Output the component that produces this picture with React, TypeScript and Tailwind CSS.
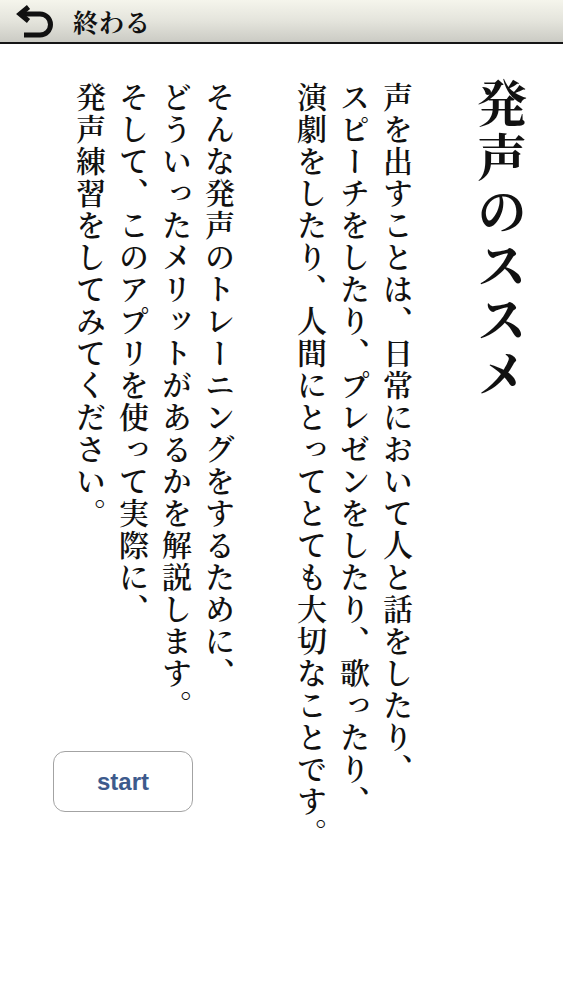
import React from "react";

const jp = { fontFamily: '"Noto Serif CJK JP", "Noto Sans CJK JP", "Noto Sans CJK SC", serif' };

export default function App() {
  return (
    <div className="w-[563px] h-[1000px] bg-white text-[#111]" style={jp}>
      <header className="flex items-center h-[44px] border-b-2 border-[#151515] bg-gradient-to-b from-[#f5f5ec] via-[#e4e4dc] to-[#cbcbc4]">
        <svg width="42" height="34" viewBox="15 5 42 34" className="ml-[15px] shrink-0">
          <path d="M22 15 H40 A10.5 10.5 0 0 1 40 36 H24" fill="none" stroke="#111" strokeWidth="5" />
          <path d="M28.5 8 L20 15 L28.5 22" fill="none" stroke="#111" strokeWidth="5" strokeLinejoin="miter" />
        </svg>
        <span className="ml-[16px] text-[25px] leading-none font-bold tracking-[1px]">終わる</span>
      </header>

      <main className="flex flex-row justify-end items-start pt-[34px] pr-[36px]">
        <div className="flex flex-col items-end">
          <p className="[writing-mode:vertical-rl] h-[640px] mt-[4px] text-[30px] leading-[43px] tracking-[2px] font-semibold whitespace-nowrap">
            そんな発声のトレーニングをするために、<br />
            どういったメリットがあるかを解説します。<br />
            そして、このアプリを使って実際に、<br />
            発声練習をしてみてください。
          </p>
          <button
            className="mt-[29px] mr-[48px] w-[140px] h-[61px] rounded-[12px] border-[1.5px] border-[#a3a3a3] bg-white text-[#3d5a8c] text-[24px] font-bold"
            style={{ fontFamily: '"Liberation Sans", Arial, sans-serif' }}
          >
            start
          </button>
        </div>
        <p className="[writing-mode:vertical-rl] h-[768px] mt-[4px] ml-[49px] text-[30px] leading-[43px] tracking-[2px] font-semibold whitespace-nowrap">
          声を出すことは、日常において人と話をしたり、<br />
          スピーチをしたり、プレゼンをしたり、歌ったり、<br />
          演劇をしたり、人間にとってとても大切なことです。
        </p>
        <h1 className="[writing-mode:vertical-rl] ml-[58px] text-[50px] leading-[50px] tracking-[4px] font-bold whitespace-nowrap">
          発声のススメ
        </h1>
      </main>
    </div>
  );
}
